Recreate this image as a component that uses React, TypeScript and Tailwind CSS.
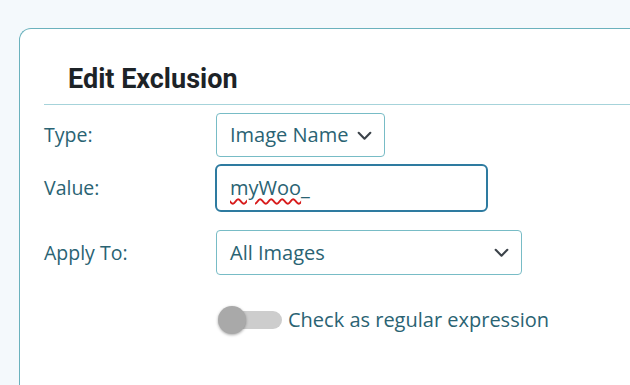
import React from 'react';

const Chevron = () => (
  <svg width="17" height="17" viewBox="0 0 16 16" fill="none" className="shrink-0">
    <path d="M2.5 5.5L8 11l5.5-5.5" stroke="#3c434a" strokeWidth="2" strokeLinecap="round" strokeLinejoin="round" />
  </svg>
);

export default function App() {
  return (
    <div className="h-[385px] w-[630px] overflow-hidden bg-[#f4f9fc] pt-[28px] pl-[19px] font-['Open_Sans',sans-serif] text-[#2a6373]">
      <div className="h-[400px] rounded-tl-[12px] border-t border-l border-[#6bb2bd] bg-white pl-[24px]">
        <h2 className="pl-[24px] pt-[34px] pb-[9px] font-['Roboto',sans-serif] text-[27px] font-bold leading-[32px] text-[#1d2327]">
          Edit Exclusion
        </h2>
        <div className="h-px bg-[#a6d3da]" />

        <div className="mt-[8px] flex items-center">
          <span className="w-[172px] text-[19.5px]">Type:</span>
          <div className="flex h-[44px] w-[169px] items-center justify-between rounded-[4px] border border-[#78bcc6] pl-[13px] pr-[11px] text-[20px]">
            <span>Image Name</span>
            <Chevron />
          </div>
        </div>

        <div className="mt-[7px] flex items-center">
          <span className="w-[171px] text-[19.5px]">Value:</span>
          <div className="flex h-[48px] w-[273px] items-center rounded-[6px] border-2 border-[#2e7ba0] pl-[13px] text-[20px]">
            <span className="underline decoration-wavy decoration-[#d81b1b] decoration-[1.5px] underline-offset-[3px]">myWoo</span>
            <span>_</span>
          </div>
        </div>

        <div className="mt-[18px] flex items-center">
          <span className="w-[172px] text-[19.5px]">Apply To:</span>
          <div className="flex h-[45px] w-[306px] items-center justify-between rounded-[4px] border border-[#78bcc6] pl-[13px] pr-[11px] text-[20px]">
            <span>All Images</span>
            <Chevron />
          </div>
        </div>

        <div className="mt-[30px] flex items-center pl-[174px]">
          <div className="relative h-[28px] w-[64px]">
            <div className="absolute left-[6px] right-0 top-[5px] h-[18px] rounded-full bg-[#cdcdcd]" />
            <div className="absolute left-0 top-0 h-[28px] w-[28px] rounded-full bg-[#a9a9a9] shadow-[0_1px_3px_rgba(0,0,0,0.35)]" />
          </div>
          <span className="ml-[6px] text-[20px]">Check as regular expression</span>
        </div>
      </div>
    </div>
  );
}
